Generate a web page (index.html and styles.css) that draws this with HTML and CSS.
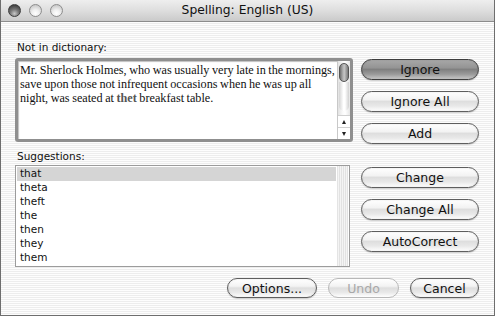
FILE: index.html
```html
<!DOCTYPE html>
<html>
<head>
<meta charset="utf-8">
<link rel="stylesheet" href="styles.css">
</head>
<body>
<div class="window">
  <div class="titlebar">
    <div class="lights">
      <span class="light light-close"></span>
      <span class="light"></span>
      <span class="light"></span>
    </div>
    <div class="title">Spelling: English (US)</div>
  </div>
  <div class="content">
    <div class="main">
      <div class="left">
        <div class="label">Not in dictionary:</div>
        <div class="textbox">
          <div class="text">Mr. Sherlock Holmes, who was usually very late in the mornings, save upon those not infrequent occasions when he was up all night, was seated at <b class="miss">thet</b> breakfast table.</div>
          <div class="vscroll">
            <div class="thumb"></div>
            <div class="track-rest"></div>
            <div class="arrow arrow-up"><span class="tri-up"></span></div>
            <div class="arrow arrow-down"><span class="tri-down"></span></div>
          </div>
        </div>
        <div class="label label-sugg">Suggestions:</div>
        <div class="list">
          <ul class="items">
            <li class="item item-sel">that</li>
            <li class="item">theta</li>
            <li class="item">theft</li>
            <li class="item">the</li>
            <li class="item">then</li>
            <li class="item">they</li>
            <li class="item">them</li>
          </ul>
          <div class="list-track"></div>
        </div>
      </div>
      <div class="right">
        <div class="group">
          <button class="btn btn-default">Ignore</button>
          <button class="btn">Ignore All</button>
          <button class="btn">Add</button>
        </div>
        <div class="group group-2">
          <button class="btn">Change</button>
          <button class="btn">Change All</button>
          <button class="btn">AutoCorrect</button>
        </div>
      </div>
    </div>
    <div class="footer">
      <button class="btn btn-small btn-options">Options...</button>
      <button class="btn btn-small btn-undo" disabled>Undo</button>
      <button class="btn btn-small btn-cancel">Cancel</button>
    </div>
  </div>
</div>
</body>
</html>
```
FILE: styles.css
```css
html, body {
  margin: 0;
  padding: 0;
  background: #ffffff;
}
.window {
  width: 495px;
  height: 316px;
  box-sizing: border-box;
  border: 1px solid #6e6e6e;
  border-top: none;
  font-family: "DejaVu Sans", sans-serif;
  color: #111;
  display: flex;
  flex-direction: column;
}
.titlebar {
  height: 22px;
  box-sizing: border-box;
  background: linear-gradient(#eeeeee, #dedede 50%, #cacaca);
  border-bottom: 1px solid #8c8c8c;
  display: flex;
  align-items: center;
  position: relative;
}
.lights {
  display: flex;
  gap: 8px;
  margin-left: 7px;
}
.light {
  width: 13px;
  height: 13px;
  box-sizing: border-box;
  border-radius: 50%;
  border: 1px solid #8d8d8d;
  background: radial-gradient(circle at 50% 75%, #ffffff 0, #f0f0f0 35%, #cfcfcf 75%, #b8b8b8 100%);
}
.light-close {
  border-color: #3c3c3c;
  background: radial-gradient(circle at 50% 78%, #c8c8c8 0, #7a7a7a 40%, #444 80%, #333 100%);
}
.title {
  position: absolute;
  left: 0;
  right: 0;
  top: 0;
  line-height: 21px;
  text-align: center;
  font-size: 12.3px;
  color: #111;
}
.content {
  flex: 1;
  background: repeating-linear-gradient(#fdfdfd 0 1px, #ededed 1px 2px);
  padding: 19px 14px 0 14px;
}
.main {
  display: flex;
}
.left {
  width: 338px;
}
.label {
  font-size: 10.5px;
  line-height: 13px;
  margin-left: 2px;
  margin-bottom: 4px;
  color: #111;
}
.label-sugg {
  margin-top: 8px;
  margin-bottom: 2px;
}
.textbox {
  height: 84px;
  box-sizing: border-box;
  border: 3px solid #8f8f8f;
  border-radius: 3px;
  background: #fff;
  display: flex;
  box-shadow: inset 1px 1px 1px rgba(0,0,0,0.25);
}
.text {
  flex: 1;
  font-family: "Liberation Serif", serif;
  font-size: 12.2px;
  line-height: 14px;
  word-spacing: -0.5px;
  padding: 2px 1px 0 2px;
  color: #111;
}
.miss {
  color: #555;
}
.vscroll {
  width: 12px;
  border-left: 1px solid #c8c8c8;
  display: flex;
  flex-direction: column;
  background: linear-gradient(90deg, #e2e2e2, #fafafa 40%, #ffffff 60%, #e6e6e6);
}
.thumb {
  margin: 2px 1px 0 1px;
  height: 19px;
  box-sizing: border-box;
  border: 1px solid #555;
  border-radius: 5px;
  background: linear-gradient(90deg, #6f6f6f, #b6b6b6 40%, #c4c4c4 55%, #7a7a7a);
}
.track-rest {
  flex: 1;
  margin: 0 1px 4px 1px;
  border-radius: 0 0 5px 5px;
  background: linear-gradient(90deg, #d4d4d4, #ffffff 45%, #ffffff 60%, #d0d0d0);
}
.arrow {
  height: 11px;
  display: flex;
  align-items: center;
  justify-content: center;
  background: #fff;
}
.arrow-up {
  border-top: 1px solid #d0d0d0;
}
.arrow-down {
  border-top: 1px solid #d0d0d0;
}
.tri-up {
  width: 0;
  height: 0;
  border-left: 2.5px solid transparent;
  border-right: 2.5px solid transparent;
  border-bottom: 4px solid #222;
}
.tri-down {
  width: 0;
  height: 0;
  border-left: 2.5px solid transparent;
  border-right: 2.5px solid transparent;
  border-top: 4px solid #222;
}
.list {
  width: 335px;
  height: 102px;
  box-sizing: border-box;
  border: 1px solid #9c9c9c;
  background: #fff;
  display: flex;
}
.items {
  list-style: none;
  margin: 0;
  padding: 1px 1px 0 1px;
  flex: 1;
}
.item {
  font-size: 10.5px;
  line-height: 14px;
  padding-left: 3px;
  color: #111;
}
.item-sel {
  background: #d5d5d5;
  line-height: 13px;
  padding-bottom: 1px;
  margin-bottom: -1px;
}
.list-track {
  width: 10px;
  margin-right: 1px;
  border-left: 1px solid #e4e4e4;
  background: repeating-linear-gradient(90deg, #f4f4f4 0 1px, #e2e2e2 1px 2px);
}
.right {
  margin-left: 8px;
  width: 118px;
  display: flex;
  flex-direction: column;
}
.group {
  display: flex;
  flex-direction: column;
  gap: 11px;
  margin-top: 18px;
}
.group-2 {
  margin-top: 23px;
}
.btn {
  height: 21px;
  width: 118px;
  box-sizing: border-box;
  border: 1px solid #5e5e5e;
  border-radius: 11px;
  padding: 0;
  font-family: "DejaVu Sans", sans-serif;
  font-size: 12.5px;
  color: #111;
  background: linear-gradient(#ffffff 0, #f3f3f3 40%, #dedede 50%, #e9e9e9 75%, #ffffff 100%);
  box-shadow: 0 1px 1px rgba(0,0,0,0.18), inset 0 0 2px rgba(0,0,0,0.12);
}
.btn-default {
  border-color: #3e3e3e;
  background: linear-gradient(#a8a8a8 0, #959595 40%, #808080 50%, #9a9a9a 75%, #c8c8c8 100%);
}
.footer {
  display: flex;
  justify-content: flex-end;
  gap: 11px;
  margin-top: 11px;
  margin-right: 1px;
}
.btn-small {
  height: 20px;
  border-radius: 10px;
}
.btn-options {
  width: 90px;
}
.btn-undo {
  width: 71px;
  color: #a8a8a8;
  border-color: #b8b8b8;
  box-shadow: none;
}
.btn-cancel {
  width: 69px;
}
```
